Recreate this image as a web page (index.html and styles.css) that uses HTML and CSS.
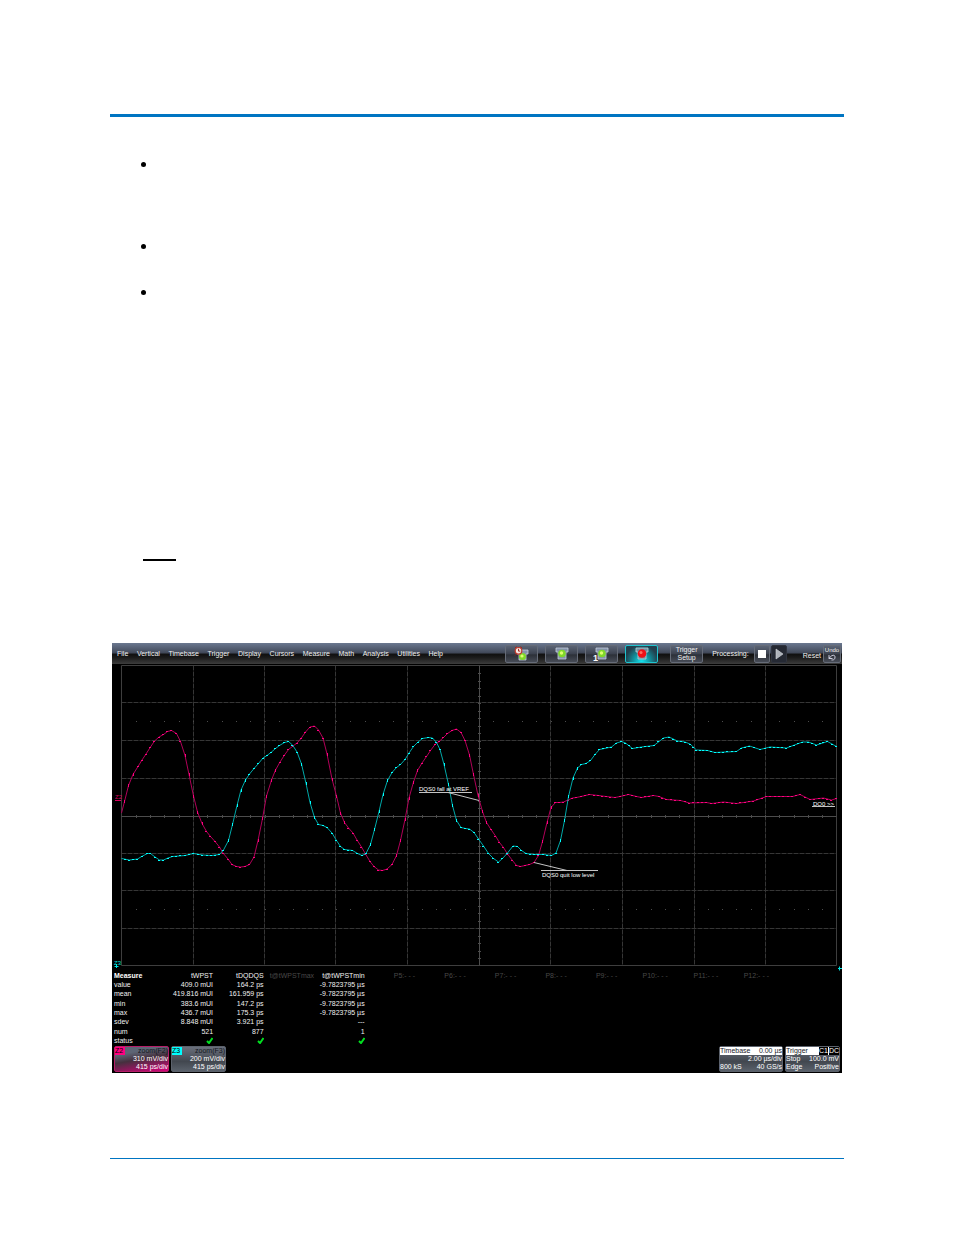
FILE: index.html
```html
<!DOCTYPE html>
<html lang="en">
<head>
    <meta charset="UTF-8">
    <meta name="viewport" content="width=device-width, initial-scale=1.0">
    <title>tWPST Measurement</title>
    <link rel="stylesheet" href="styles.css">
</head>
<body>

<div class="page">
    <ul class="notes">
        <li class="tall"></li>
        <li></li>
        <li></li>
    </ul>
    <hr class="note-line">

    <div class="scope">
        <div class="toolbar">
            <nav class="menu">
                <a href="#">File</a>
                <a href="#">Vertical</a>
                <a href="#">Timebase</a>
                <a href="#">Trigger</a>
                <a href="#">Display</a>
                <a href="#">Cursors</a>
                <a href="#">Measure</a>
                <a href="#">Math</a>
                <a href="#">Analysis</a>
                <a href="#">Utilities</a>
                <a href="#">Help</a>
            </nav>
            <div class="modes">
                <button aria-label="Auto">
                    <svg viewBox="0 0 31 16">
                        <path d="M11 4h11v4h-2v6h-7v-6h-2z" fill="#8593ab" stroke="#c3cddc" stroke-width="0.8"/>
                        <circle cx="16.500" cy="10.500" r="3.500" fill="#7fd82a"/>
                        <circle cx="16" cy="10" r="1.600" fill="#dcff70"/>
                        <circle cx="12.500" cy="4.800" r="3.300" fill="#f6e9e2" stroke="#c0392b" stroke-width="1.200"/>
                        <path d="M12.500 2.800v2.300h1.800M9 2l1.500-1.300M16 2l-1.500-1.300M10 8.500l-1 1" stroke="#a3281d" stroke-width="1" fill="none"/>
                    </svg>
                </button>
                <button aria-label="Normal">
                    <svg viewBox="0 0 31 16">
                        <path d="M10 2h12v4h-2v7h-8v-7h-2z" fill="#8593ab" stroke="#c3cddc" stroke-width="0.8"/>
                        <circle cx="16" cy="7.500" r="3.800" fill="#7fd82a"/>
                        <circle cx="15.500" cy="7" r="1.700" fill="#dcff70"/>
                    </svg>
                </button>
                <button aria-label="Single">
                    <svg viewBox="0 0 31 16">
                        <path d="M10 2h12v4h-2v7h-8v-7h-2z" fill="#8593ab" stroke="#c3cddc" stroke-width="0.8"/>
                        <circle cx="16" cy="7.500" r="3.800" fill="#7fd82a"/>
                        <circle cx="15.500" cy="7" r="1.700" fill="#dcff70"/>
                        <text class="one" x="7" y="15">1</text>
                    </svg>
                </button>
                <button class="active" aria-label="Stop trigger">
                    <svg viewBox="0 0 31 16">
                        <path d="M10 2h12v4h-2v7h-8v-7h-2z" fill="#6f8fa0" stroke="#b8d2da" stroke-width="0.8"/>
                        <circle cx="16" cy="7.500" r="4.300" fill="#f01018"/>
                        <circle cx="15" cy="6.500" r="1.500" fill="#ff6a60"/>
                    </svg>
                </button>
            </div>
            <button class="setup">Trigger<br>Setup</button>
            <span class="processing">Processing:</span>
            <button class="square" aria-label="Stop">
                <svg viewBox="0 0 14 16"><rect x="3" y="4" width="8" height="8" fill="#fff"/></svg>
            </button>
            <button class="square dark" aria-label="Run">
                <svg viewBox="0 0 14 16"><path d="M4 3l7 5-7 5z" fill="#aeb2b9" stroke="#d0d3d8" stroke-width="0.6"/></svg>
            </button>
            <span class="reset">Reset</span>
            <button class="undo">Undo
                <svg viewBox="0 0 12 7"><path d="M3 1v3.500h3.500M3 4.500C5 1 9 0 9 3S7 6 5.500 6" fill="none" stroke="#dde" stroke-width="0.9"/></svg>
            </button>
        </div>

        <svg class="plot" viewBox="112 664 730 308" role="img" aria-label="DQ and DQS waveforms">
            <g id="grid"></g>
            <g id="traces"></g>

            <path class="leader" d="M419 792.500H472M448 792.500L479 800.500"/>
            <text x="419" y="791">DQS0 fall at VREF</text>
            <path class="leader" d="M534 862.500L567 870.500M541 870.500H598"/>
            <text x="542" y="877">DQS0 quit low level</text>
            <text x="813" y="806">DQ0 &gt;&gt;</text>
            <path class="leader" d="M812 806.500H835"/>

            <text class="z2-mark" x="115" y="799">Z2</text>
            <path d="M115 800.500h6" stroke="#d8005f"/>
            <text class="z3-mark" x="114" y="965">Z3</text>
            <path d="M116.500 964v4M114.500 966.500h4" stroke="#00e5e5"/>
            <path d="M838 968.500h4M839.500 966.500v4" stroke="#00e5e5"/>
        </svg>

        <table class="measure">
            <thead>
                <tr>
                    <th>Measure</th><th>tWPST</th><th>tDQDQS</th><th class="off">t@tWPSTmax</th><th>t@tWPSTmin</th>
                    <th class="off">P5:- - -</th><th class="off">P6:- - -</th><th class="off">P7:- - -</th><th class="off">P8:- - -</th>
                    <th class="off">P9:- - -</th><th class="off">P10:- - -</th><th class="off">P11:- - -</th><th class="off">P12:- - -</th>
                </tr>
            </thead>
            <tbody>
                <tr><td>value</td><td>409.0 mUI</td><td>164.2 ps</td><td></td><td>-9.7823795 µs</td></tr>
                <tr><td>mean</td><td>419.816 mUI</td><td>161.959 ps</td><td></td><td>-9.7823795 µs</td></tr>
                <tr><td>min</td><td>383.6 mUI</td><td>147.2 ps</td><td></td><td>-9.7823795 µs</td></tr>
                <tr><td>max</td><td>436.7 mUI</td><td>175.3 ps</td><td></td><td>-9.7823795 µs</td></tr>
                <tr><td>sdev</td><td>8.848 mUI</td><td>3.921 ps</td><td></td><td>---</td></tr>
                <tr><td>num</td><td>521</td><td>877</td><td></td><td>1</td></tr>
                <tr>
                    <td>status</td>
                    <td><svg class="check" viewBox="0 0 7 7"><path d="M1 4l2 2 3.500-5"/></svg></td>
                    <td><svg class="check" viewBox="0 0 7 7"><path d="M1 4l2 2 3.500-5"/></svg></td>
                    <td></td>
                    <td><svg class="check" viewBox="0 0 7 7"><path d="M1 4l2 2 3.500-5"/></svg></td>
                </tr>
            </tbody>
        </table>

        <div class="descriptors">
            <div class="box z2">
                <div class="row"><span class="tag">Z2</span><span class="fn">zoom(F2)</span></div>
                <div class="row end">310 mV/div</div>
                <div class="row end">415 ps/div</div>
            </div>
            <div class="box z3">
                <div class="row"><span class="tag">Z3</span><span class="fn">zoom(F3)</span></div>
                <div class="row end">200 mV/div</div>
                <div class="row end">415 ps/div</div>
            </div>
            <div class="box timebase">
                <div class="row title"><span>Timebase</span><span>0.00 µs</span></div>
                <div class="row end">2.00 µs/div</div>
                <div class="row"><span>800 kS</span><span>40 GS/s</span></div>
            </div>
            <div class="box trigger">
                <div class="row title"><span>Trigger</span><span class="chips"><b>C1</b><b>DC</b></span></div>
                <div class="row"><span>Stop</span><span>100.0 mV</span></div>
                <div class="row"><span>Edge</span><span>Positive</span></div>
            </div>
        </div>
    </div>

    <hr class="footer-line">
</div>

<script src="scope.js"></script>
</body>
</html>
```
FILE: styles.css
```css
body {
    margin: 0;
    background-color: #fff;
    font-family: "Liberation Sans", Arial, sans-serif;
}
.page {
    margin: 114px 110px 0;
    border-top: 3px solid #0075c2;
    padding-top: 36px;
}
.notes {
    list-style: none;
    margin: 0;
    padding: 0 0 0 31px;
}
.notes li {
    height: 46px;
    padding-top: 9px;
    box-sizing: border-box;
}
.notes li.tall {
    height: 82px;
}
.notes li::before {
    content: "";
    display: block;
    width: 5px;
    height: 5px;
    border-radius: 50%;
    background-color: #000;
}
.note-line {
    width: 33px;
    height: 2px;
    margin: 232px 0 0 33px;
    border: none;
    background-color: #000;
}
.footer-line {
    height: 1px;
    margin: 85px 0 76px;
    border: none;
    background-color: #0075c2;
}

/* oscilloscope screen */
.scope {
    margin: 82px 2px 0;
    padding-bottom: 1px;
    background-color: #000;
    color: #f0f0f0;
    font-size: 7px;
    line-height: 8px;
}
.toolbar {
    display: flex;
    align-items: center;
    height: 21px;
    background: linear-gradient(#6b7890, #434b5c 45%, #101010 55%, #1c1c1c 70%, #3c3c3c);
}
.menu {
    display: flex;
    justify-content: space-between;
    width: 326px;
    margin-left: 5px;
    margin-right: auto;
}
.menu a {
    color: #f0f0f0;
    text-decoration: none;
}
.modes {
    display: flex;
    gap: 7px;
}
.toolbar button {
    box-sizing: border-box;
    height: 18px;
    padding: 0;
    border: 1px solid #666c78;
    border-radius: 2px;
    background: linear-gradient(#5b6475, #3b414e 50%, #2c3038 55%, #474c57);
    color: #f0f0f0;
    font: inherit;
    overflow: hidden;
}
.toolbar button svg {
    display: block;
    width: 100%;
    height: 100%;
}
.modes button {
    width: 33px;
}
.modes .active {
    border-color: #1fc4cf;
    background: radial-gradient(ellipse at bottom, #16e4f0, #0f98a4 35%, #22404e 75%);
}
.one {
    font-size: 9px;
    font-weight: bold;
    fill: #fff;
}
.toolbar .setup {
    width: 33px;
    margin: 0 9px 0 12px;
}
.toolbar .square {
    width: 16px;
    margin-left: 5px;
}
.toolbar .square.dark {
    margin-left: 1px;
    border-color: #30343f;
    background: #252933;
}
.reset {
    margin: 4px 2px 0 16px;
}
.toolbar .undo {
    width: 18px;
    margin-right: 1px;
    font-size: 6px;
    line-height: 7px;
}
.toolbar .undo svg {
    height: 7px;
}

/* waveform area */
.plot {
    display: block;
    width: 100%;
    height: auto;
}
.plot text {
    font-size: 6px;
    fill: #fff;
}
.plot .z2-mark {
    fill: #d8005f;
}
.plot .z3-mark {
    fill: #00e0e0;
}
.leader {
    fill: none;
    stroke: #c4c4c4;
    stroke-width: 1;
}
.frame {
    fill: none;
    stroke: #3e3e3e;
}
.axis {
    stroke: #4c4c4c;
}
.division {
    stroke: #363636;
    stroke-dasharray: 5 1;
}
.trace {
    fill: none;
    stroke-width: 1;
}

/* measure table */
.measure {
    width: 90%;
    height: 74px;
    table-layout: fixed;
    border-collapse: collapse;
}
.measure th, .measure td {
    padding: 0;
    font-weight: normal;
    text-align: right;
    white-space: nowrap;
}
.measure th:first-child, .measure td:first-child {
    padding-left: 2px;
    text-align: left;
}
.measure th:first-child {
    font-weight: bold;
    color: #fff;
}
.measure th.off {
    color: #484848;
}
.check {
    display: inline-block;
    width: 7px;
    height: 7px;
    vertical-align: top;
}
.check path {
    fill: none;
    stroke: #00e020;
    stroke-width: 2;
}

/* descriptor boxes */
.descriptors {
    display: flex;
    gap: 2px;
    padding: 0 2px;
}
.box {
    box-sizing: border-box;
    width: 55px;
    height: 26px;
    border: 1px solid #5c626c;
    border-radius: 2px;
    background: linear-gradient(#6a707c, #42474f 60%, #5a616b);
    color: #fff;
}
.row {
    display: flex;
    justify-content: space-between;
    white-space: nowrap;
}
.row.end {
    justify-content: flex-end;
}
.title {
    background-color: #fff;
    color: #1a1a2a;
}
.tag {
    width: 10px;
    color: #000;
}
.fn {
    color: #14161c;
}
.z2 {
    border-color: #b51d68;
    background: linear-gradient(170deg, #5d6575 25%, #45303e 50%, #d6007a);
}
.z2 .tag {
    background-color: #ff0080;
}
.z3 .tag {
    background-color: #00ffff;
}
.timebase {
    width: 64px;
    margin-left: auto;
}
.chips {
    display: flex;
    gap: 1px;
}
.chips b {
    background-color: #000;
    color: #fff;
    font-weight: normal;
}
```
FILE: scope.js
```js
var NS = "http://www.w3.org/2000/svg";
var left = 121.5, right = 836.5, top1 = 665.5, bottom = 965.5;
var midX = 479.5, midY = 816.5;
var grid = document.getElementById("grid");
var traces = document.getElementById("traces");

function addPath(parent, d, className) {
    var path = document.createElementNS(NS, "path");
    path.setAttribute("d", d);
    path.setAttribute("class", className);
    parent.appendChild(path);
    return path;
}

// Divisions
[193.5, 264.5, 335.5, 407.5, 550.5, 622.5, 694.5, 765.5].forEach(function (x) {
    addPath(grid, "M" + x + " " + top1 + "V" + bottom, "division");
});
[702.5, 740.5, 778.5, 853.5, 890.5, 928.5].forEach(function (y) {
    addPath(grid, "M" + left + " " + y + "H" + right, "division");
});
addPath(grid, "M" + left + " " + top1 + "H" + right + "V" + bottom + "H" + left + "Z", "frame");
addPath(grid, "M" + left + " " + midY + "H" + right + "M" + midX + " " + top1 + "V" + bottom, "axis");

// Ticks on the axes and the two dotted rows
var ticks = "";
for (var i = 1; i < 50; i++) {
    var tx = Math.round(left + i * 14.3) + 0.5;
    ticks += "M" + tx + " 815v3M" + (tx - 0.5) + " 721.5h1M" + (tx - 0.5) + " 909.5h1";
}
for (var j = 1; j < 40; j++) {
    ticks += "M478 " + (Math.round(top1 + j * 7.5) + 0.5) + "h3";
}
addPath(grid, ticks, "axis");

var dqs = [
    [121.5,813],[124.5,801.5],[128.5,785.5],[133,774.5],[138,766.5],[142,760],[146,754],[150.5,747],[154.5,741],[159,737],
    [163.5,734.5],[167.5,731.5],[171.5,730.5],[176.5,733.5],[180.5,741.5],[185,755.5],[189,774.5],[193.5,796],[197.5,812],[202,823.5],
    [206.5,831.5],[210.5,836.5],[215,841.5],[219.5,847],[223,853],[228,859],[232,864.5],[236.5,866.5],[240.5,867],[245,866.5],
    [249.5,864.5],[254,857],[258,840.5],[262.5,818.5],[266.5,796],[271.5,780],[275.5,770],[280,762],[284.5,755],[288.5,749.5],
    [293,746],[297,743],[301,738.5],[305.5,732],[310,727],[314.5,726],[318.5,730],[323,738],[327,754],[332,779],
    [336.5,796],[340.5,813],[344.5,822.5],[348.5,828],[353,833],[357,840],[361.5,847],[365.5,854],[370,861.5],[374,866.5],
    [378.5,870],[382.5,870.5],[387,869],[392,864.5],[396.5,855.5],[400.5,840.5],[405,819.5],[409,798],[413.5,782],[417.5,770.5],
    [422,763],[426.5,756.5],[430.5,750.5],[435,744.5],[439,741.5],[443.5,737.5],[447.5,733.5],[452,730.5],[456.5,729],[461,732.5],
    [465,740.5],[469.5,755],[473.5,774.5],[478,795.5],[482.5,811.5],[486.5,822.5],[491,829.5],[495.5,836],[499.5,842.5],[503.5,847.5],
    [507.5,854],[512.5,860.5],[516.5,865.5],[520.5,866.5],[525,865.5],[529.5,864.5],[534,862.5],[538.5,855.5],[542.5,841.5],[547,822.5],
    [551,807.5],[555.5,802.5],[559.5,802.5],[563.5,802],[568,800],[572.5,798],[576.5,797.5],[581,796.5],[589.5,794.5],[598.5,795.5],
    [606,796.5],[615,797.5],[620,796.5],[628.5,794.5],[636.5,796.5],[641.5,797.5],[653.5,795.5],[659,796.5],[666.5,799.5],[680.5,800.5],
    [689.5,803],[706.5,802.5],[711.5,803.5],[723.5,802],[736.5,803.5],[753.5,801],[766.5,796.5],[792.5,796.5],[800,794.5],[810,799.5],
    [823.5,798],[831.5,800],[836.5,798.5]
];
var dq = [
    [121.5,858.5],[129.5,860],[137.5,859],[142.5,856],[147.5,853.5],[150.5,853.5],[155,857],[159.5,860],[163.5,860],[168,858],
    [172.5,856.5],[185,855.5],[193.5,853.5],[202.5,855],[211.5,855.5],[219.5,854.5],[223.5,850],[228.5,840.5],[232.5,824.5],[237,805.5],
    [241,790],[245.5,780],[249.5,774],[254,768.5],[258.5,763.5],[263,758],[267,755.5],[271.5,752],[275.5,748.5],[279.5,745.5],
    [284.5,742.5],[288.5,741.5],[292.5,745],[297,752],[301.5,764],[306,783.5],[310,802.5],[314.5,817.5],[318.5,824.5],[323,825.5],
    [327,827.5],[332,833],[336.5,840.5],[340.5,846.5],[344.5,849.5],[352.5,850.5],[357.5,853.5],[362,855.5],[366,853.5],[370.5,844.5],
    [374.5,829.5],[379,811.5],[383,794.5],[387.5,780.5],[392,772.5],[396.5,767.5],[400.5,764.5],[405,759.5],[409,753],[413.5,746.5],
    [418,742],[422.5,738.5],[428.5,737.5],[432.5,738],[436.5,742.5],[440,749.5],[444,764.5],[448.5,784.5],[452.5,805.5],[456.5,820.5],
    [461,827.5],[465.5,828.5],[469.5,829],[474,832.5],[478.5,839],[483.5,846],[488.5,853.5],[493.5,858.5],[498.5,862],[502.5,858.5],
    [507.5,853],[513,846],[517.5,846.5],[521.5,850.5],[526,853.5],[534,854.5],[543.5,854.5],[551.5,855.5],[556,853],[560.5,840.5],
    [564.5,820.5],[568.5,796.5],[573,778],[577.5,768],[581.5,764.5],[586,763.5],[590.5,760.5],[595,754.5],[599.5,749.5],[611.5,747],
    [616.5,743],[621.5,741.5],[625.5,743],[632.5,748.5],[641.5,747],[654,745.5],[663.5,738],[669,737],[677.5,741],[685,742],
    [690,744],[696.5,750],[707.5,750.5],[715,752.5],[736.5,751.5],[741.5,748],[749.5,746],[760,749.5],[770,747],[786.5,748],
    [802.5,742],[808.5,742],[816.5,745],[827.5,741.5],[836.5,746.5]
];

// Line through the samples, with a bright dot about every 4 pixels
function drawTrace(points, lineColor, dotColor) {
    var line = "M" + points.join("L");
    var dots = "";
    for (var i = 1; i < points.length; i++) {
        var a = points[i - 1], b = points[i];
        var steep = Math.abs(b[1] - a[1]) > 8;
        var steps = Math.max(1, Math.round((b[0] - a[0]) / 4.3));
        for (var s = 1; s <= steps; s++) {
            var x = Math.floor(a[0] + (b[0] - a[0]) * s / steps);
            var y = Math.floor(a[1] + (b[1] - a[1]) * s / steps);
            if (steep) {
                dots += "M" + (x + 0.5) + " " + (y - 1) + "v3";
            } else {
                dots += "M" + (x - 1) + " " + (y + 0.5) + "h2";
            }
        }
    }
    addPath(traces, line, "trace").setAttribute("stroke", lineColor);
    addPath(traces, dots, "trace").setAttribute("stroke", dotColor);
}

drawTrace(dqs, "#b00058", "#ff0080");
drawTrace(dq, "#00a8a8", "#00ffff");
```
